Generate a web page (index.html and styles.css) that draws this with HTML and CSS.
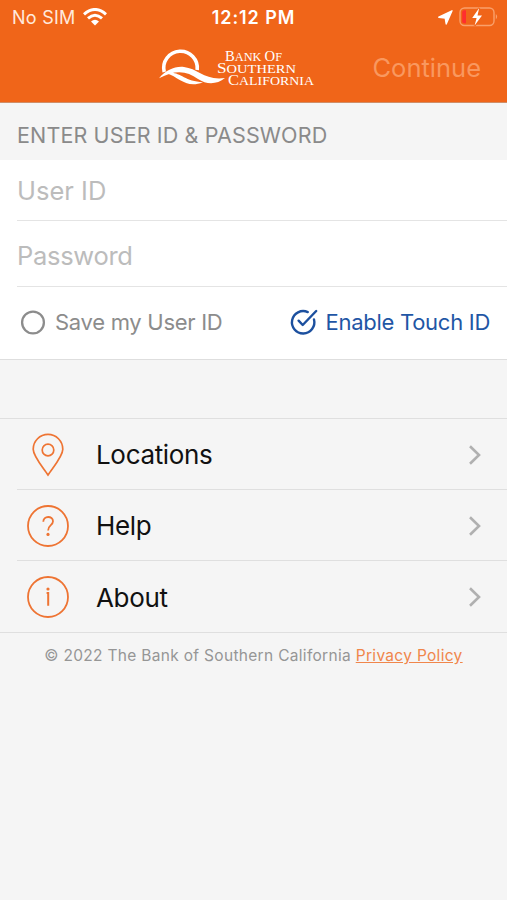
FILE: index.html
```
<!DOCTYPE html>
<html lang="en">
<head>
<meta charset="utf-8">
<title>Bank of Southern California</title>
<link rel="stylesheet" href="styles.css">
</head>
<body>
<header class="top">
  <div class="status">
    <div class="carrier"><span class="sim">No SIM</span>
      <svg width="24" height="18" viewBox="0 0 24 18"><g fill="none" stroke="#fff" stroke-width="3"><path d="M1 6.3Q12 -3.3 23 6.3"/><path d="M5 10.4Q12 4.2 19 10.4"/></g><path d="M8 13.5Q12 10 16 13.5L12 17.5Z" fill="#fff"/></svg>
    </div>
    <span class="clock">12:12 PM</span>
    <div class="power">
      <svg width="15" height="15" viewBox="0 0 15 15"><path d="M.8 7.2L14 .8L8.2 14L7.2 8Z" fill="#fff" stroke="#fff" stroke-width="1.4" stroke-linejoin="round"/></svg>
      <svg width="39" height="20" viewBox="0 0 39 20"><rect x="1" y="1" width="34" height="17.5" rx="4.5" fill="none" stroke="#f9a06b" stroke-width="1.4"/><path d="M36.8 7Q39.5 9.7 36.8 12.4Z" fill="#f9a06b"/><path d="M5 3.3H7V16.2H5Q3.2 16.2 3.2 14.2V5.3Q3.2 3.3 5 3.3Z" fill="#ff2e2e"/><path d="M20.2 1L13.2 11H17.6L15.6 18.6L23 8.5H18.5Z" fill="#fff" stroke="#f06519" stroke-width="2" paint-order="stroke"/></svg>
    </div>
  </div>
  <div class="nav">
    <svg class="logo" width="156" height="42" viewBox="0 0 156 42">
      <path d="M5.2 26A16.8 16.8 0 1 1 38.2 24" fill="none" stroke="#fff" stroke-width="3.6"/>
      <path d="M0 32.2C7 24 16 20 25 21C39 22.5 46 35 66 32C58 38.5 48 39 39 33C28 24.5 16 23.5 0 32.2Z" fill="#fff"/>
      <path d="M8 27.5C20 24 24 35.5 44 36.3C27 43 20 31 8 27.5Z" fill="#fff"/>
      <g class="wordmark" fill="#fff">
        <text x="66" y="14.8" textLength="57" lengthAdjust="spacingAndGlyphs"><tspan class="cap">B</tspan>ANK <tspan class="cap">O</tspan>F</text>
        <text x="58" y="26.5" textLength="79" lengthAdjust="spacingAndGlyphs"><tspan class="cap">S</tspan>OUTHERN</text>
        <text x="69" y="38.5" textLength="86" lengthAdjust="spacingAndGlyphs"><tspan class="cap">C</tspan>ALIFORNIA</text>
      </g>
    </svg>
    <span class="continue">Continue</span>
  </div>
</header>
<main>
  <h1 class="section"><span>ENTER USER ID &amp; PASSWORD</span></h1>
  <form class="login">
    <div class="field"><span class="t-user">User ID</span></div>
    <div class="field pass"><span class="t-pass">Password</span></div>
    <div class="options">
      <div class="option"><svg width="26" height="26" viewBox="0 0 26 26"><circle cx="13" cy="13.5" r="10.9" fill="none" stroke="#8c8c8c" stroke-width="2.3"/></svg><span class="t-save">Save my User ID</span></div>
      <div class="option touch"><svg width="30" height="28" viewBox="0 0 30 28"><g fill="none" stroke="#1c509f" stroke-width="2.4" stroke-linecap="round" stroke-linejoin="round"><path d="M18.8 4.1A11.2 11.2 0 1 0 25 11.5"/><path d="M9.6 12.7L13.7 17L27.2 3"/></g></svg><span class="t-touch">Enable Touch ID</span></div>
    </div>
  </form>
  <nav class="menu">
    <div class="item"><svg class="icon" width="44" height="44" viewBox="0 0 44 44"><g fill="none" stroke="#ee7433" stroke-width="1.7"><path d="M22 42C18 35.5 7.2 23.5 7.2 16.2A14.8 14.8 0 0 1 36.8 16.2C36.8 23.5 26 35.5 22 42Z"/><circle cx="22" cy="17" r="5.8"/></g></svg><span class="label">Locations</span><svg class="chev" width="14" height="22" viewBox="0 0 14 22"><path d="M2 2.3L11 11L2 19.7"/></svg></div>
    <div class="item"><svg class="icon" width="44" height="44" viewBox="0 0 44 44"><g fill="none" stroke="#ee7433" stroke-width="1.8"><circle cx="22" cy="22" r="20"/><path d="M17.3 17.8C17.3 11.4 27 11.6 27 17.3C27 21.4 22.1 21 22.1 26.4"/></g><circle cx="22" cy="30.4" r="1.6" fill="#ee7433"/></svg><span class="label">Help</span><svg class="chev" width="14" height="22" viewBox="0 0 14 22"><path d="M2 2.3L11 11L2 19.7"/></svg></div>
    <div class="item"><svg class="icon" width="44" height="44" viewBox="0 0 44 44"><g fill="none" stroke="#ee7433" stroke-width="1.8"><circle cx="22" cy="22" r="20"/><path d="M20.6 18H22.2V30.8" stroke-width="2"/></g><circle cx="22" cy="14" r="1.6" fill="#ee7433"/></svg><span class="label">About</span><svg class="chev" width="14" height="22" viewBox="0 0 14 22"><path d="M2 2.3L11 11L2 19.7"/></svg></div>
  </nav>
</main>
<footer class="legal"><span>© 2022 The Bank of Southern California <a class="privacy">Privacy Policy</a></span></footer>
</body>
</html>
```
FILE: styles.css
```
* { box-sizing: border-box; }
body { margin: 0; min-height: 900px; background: #f5f5f5; font-family: Inter, "Liberation Sans", sans-serif; white-space: nowrap; }
svg { display: block; flex: none; }
.top { height: 103px; background: #f06519; border-bottom: 1px solid #cf8e68; color: #fff; }
.status { height: 34px; display: grid; grid-template-columns: 1fr auto 1fr; align-items: center; padding: 0 9px 0 12px; }
.carrier { display: flex; align-items: center; gap: 7px; color: #ffe9dc; }
.sim { font-size: 18px; letter-spacing: 0.25px; }
.clock { font-size: 18px; font-weight: 600; letter-spacing: 0.9px; margin: 0 1px 0 -2px; }
.power { display: flex; justify-content: flex-end; align-items: center; gap: 6px; }
.nav { height: 66px; padding: 0 26px 0 159px; display: flex; align-items: center; justify-content: space-between; }
.wordmark { font-family: "Liberation Serif", serif; font-size: 12.8px; }
.cap { font-size: 15.2px; }
.continue { font-size: 25.5px; color: #f9985f; }
.section { margin: 0; height: 57px; padding: 7px 17px 0; display: flex; align-items: center; font-size: 21.5px; letter-spacing: 0.13px; font-weight: 400; color: #8a8a8a; }
.login { background: #fff; border-bottom: 1px solid #dedede; }
.field { margin-left: 17px; height: 61px; padding-top: 1px; display: flex; align-items: center; border-bottom: 1px solid #e4e4e4; font-size: 25.5px; color: #bcbcbc; }
.pass { height: 66px; padding-top: 3px; }
.t-pass { letter-spacing: -0.3px; }
.options { height: 72px; display: flex; align-items: center; justify-content: space-between; padding: 0 17px 2px 20px; font-size: 22px; color: #8c8c8c; letter-spacing: -0.28px; }
.option { display: flex; align-items: center; gap: 9px; }
.touch { color: #1f56a5; gap: 7px; }
.menu { margin-top: 58px; border-top: 1px solid #dfdfdf; border-bottom: 1px solid #dfdfdf; }
.item { height: 71px; margin-left: 17px; padding: 1px 25px 0 9px; display: flex; align-items: center; }
.item:first-child { height: 70px; }
.item:last-child { height: 72px; }
.item + .item { border-top: 1px solid #dfdfdf; }
.label { flex: 1; padding-left: 26px; font-size: 26px; color: #111; letter-spacing: -0.33px; }
.chev path { fill: none; stroke: #b0b0b0; stroke-width: 2.6; }
.legal { height: 45px; display: flex; align-items: center; justify-content: center; font-size: 15.5px; letter-spacing: 0.31px; color: #969696; }
.privacy { color: #f0864b; text-decoration: underline; }
```
